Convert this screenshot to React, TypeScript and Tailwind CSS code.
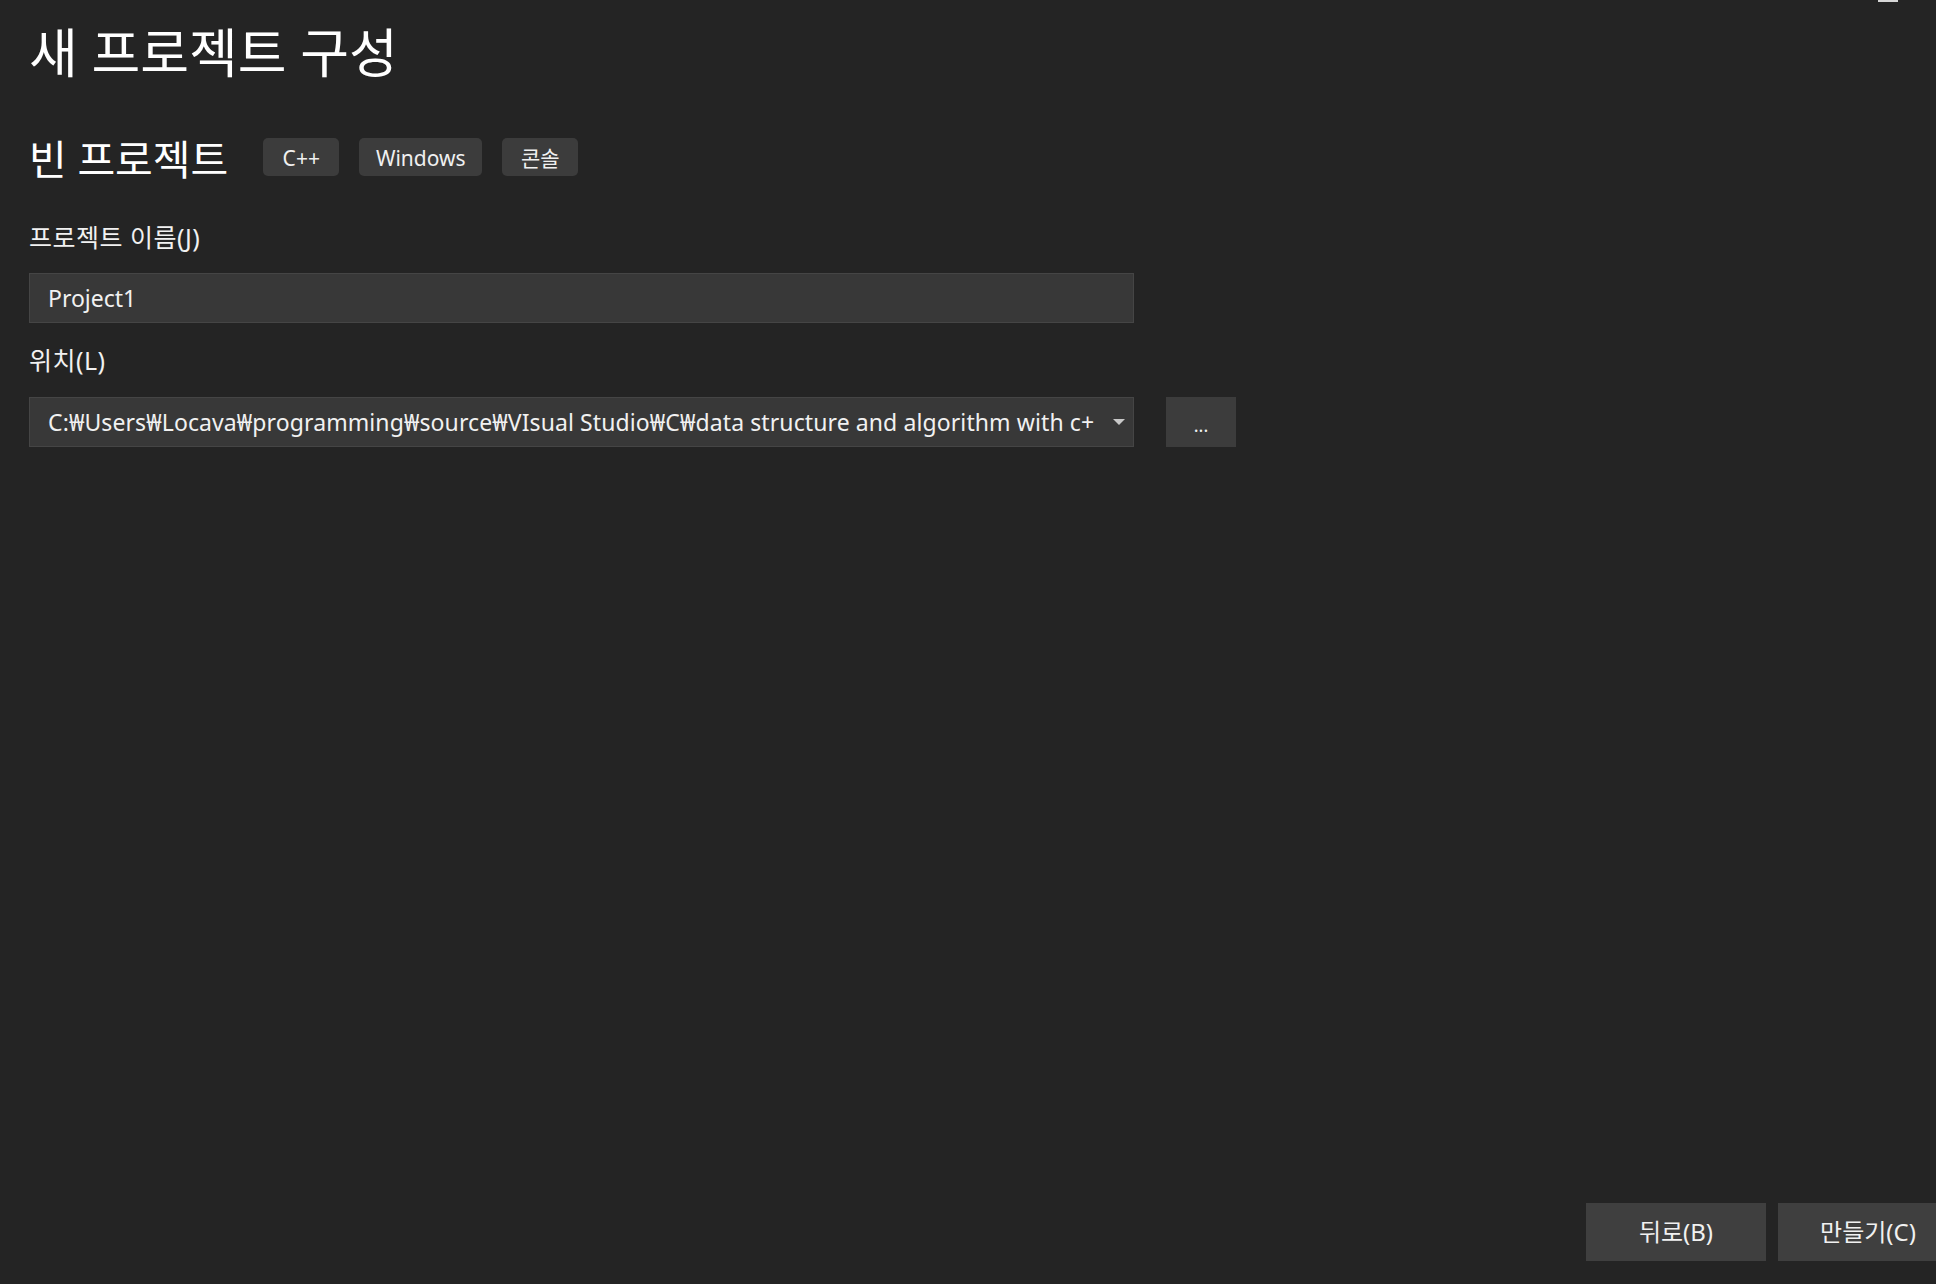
import React from 'react';

const FONT = "font-['Noto_Sans','Noto_Sans_CJK_KR',sans-serif]";

function Tag({ label, w }: { label: string; w: string }) {
  return (
    <div className={`${w} h-[38px] pt-[4px] flex items-center justify-center rounded-[5px] bg-[#3c3c3c] text-[21px] text-[#f0f0f0]`}>
      {label}
    </div>
  );
}

export default function App() {
  return (
    <div className={`${FONT} relative w-[1936px] h-[1284px] overflow-hidden bg-[#242424] text-white flex flex-col`}>
      {/* cut-off window control at top right */}
      <div className="absolute top-0 right-[38px] w-[20px] h-[2px] bg-[#d6d6d6]" />

      <div className="pl-[29px] pt-[21px] flex flex-col">
        <h1 className="text-[53px] leading-[64px] font-normal">새 프로젝트 구성</h1>

        <div className="mt-[49px] flex items-start">
          <h2 className="text-[41px] leading-[50px] font-normal mr-[35px]">빈 프로젝트</h2>
          <div className="mt-[4px] flex gap-[20px]">
            <Tag label="C++" w="w-[76px]" />
            <Tag label="Windows" w="w-[123px]" />
            <Tag label="콘솔" w="w-[76px]" />
          </div>
        </div>

        <label className="mt-[37px] text-[25px] leading-[32px] tracking-[0.5px] text-[#f1f1f1]">프로젝트 이름(J)</label>
        <div className="mt-[20px] w-[1105px] h-[50px] bg-[#383838] border border-[#454545] flex items-center pl-[18px] text-[23px] text-[#f1f1f1]">
          Project1
        </div>

        <label className="mt-[21px] text-[25px] leading-[32px] tracking-[0.5px] text-[#f1f1f1]">위치(L)</label>
        <div className="mt-[21px] flex items-center gap-[32px]">
          <div className="w-[1105px] h-[50px] bg-[#383838] border border-[#454545] flex items-center pl-[18px] pr-[8px] text-[23px] tracking-[0.1px] text-[#f1f1f1]">
            <span className="flex-1 overflow-hidden whitespace-nowrap">
              C:₩Users₩Locava₩programming₩source₩VIsual Studio₩C₩data structure and algorithm with c+
            </span>
            <svg width="12" height="7" viewBox="0 0 12 7" className="ml-[10px] shrink-0">
              <path d="M0 0 L12 0 L6 6 Z" fill="#c8c8c8" />
            </svg>
          </div>
          <button className="w-[70px] h-[50px] bg-[#3c3c3c] text-[18px] text-[#f1f1f1] flex items-center justify-center pt-[6px]">
            ...
          </button>
        </div>
      </div>

      <div className="flex-1" />

      <div className="flex justify-end gap-[12px] mr-[-22px] mb-[23px]">
        <button className="w-[180px] h-[58px] bg-[#3f3f3f] text-[24px] text-[#f1f1f1]">뒤로(B)</button>
        <button className="w-[180px] h-[58px] bg-[#3f3f3f] text-[24px] text-[#f1f1f1]">만들기(C)</button>
      </div>
    </div>
  );
}
